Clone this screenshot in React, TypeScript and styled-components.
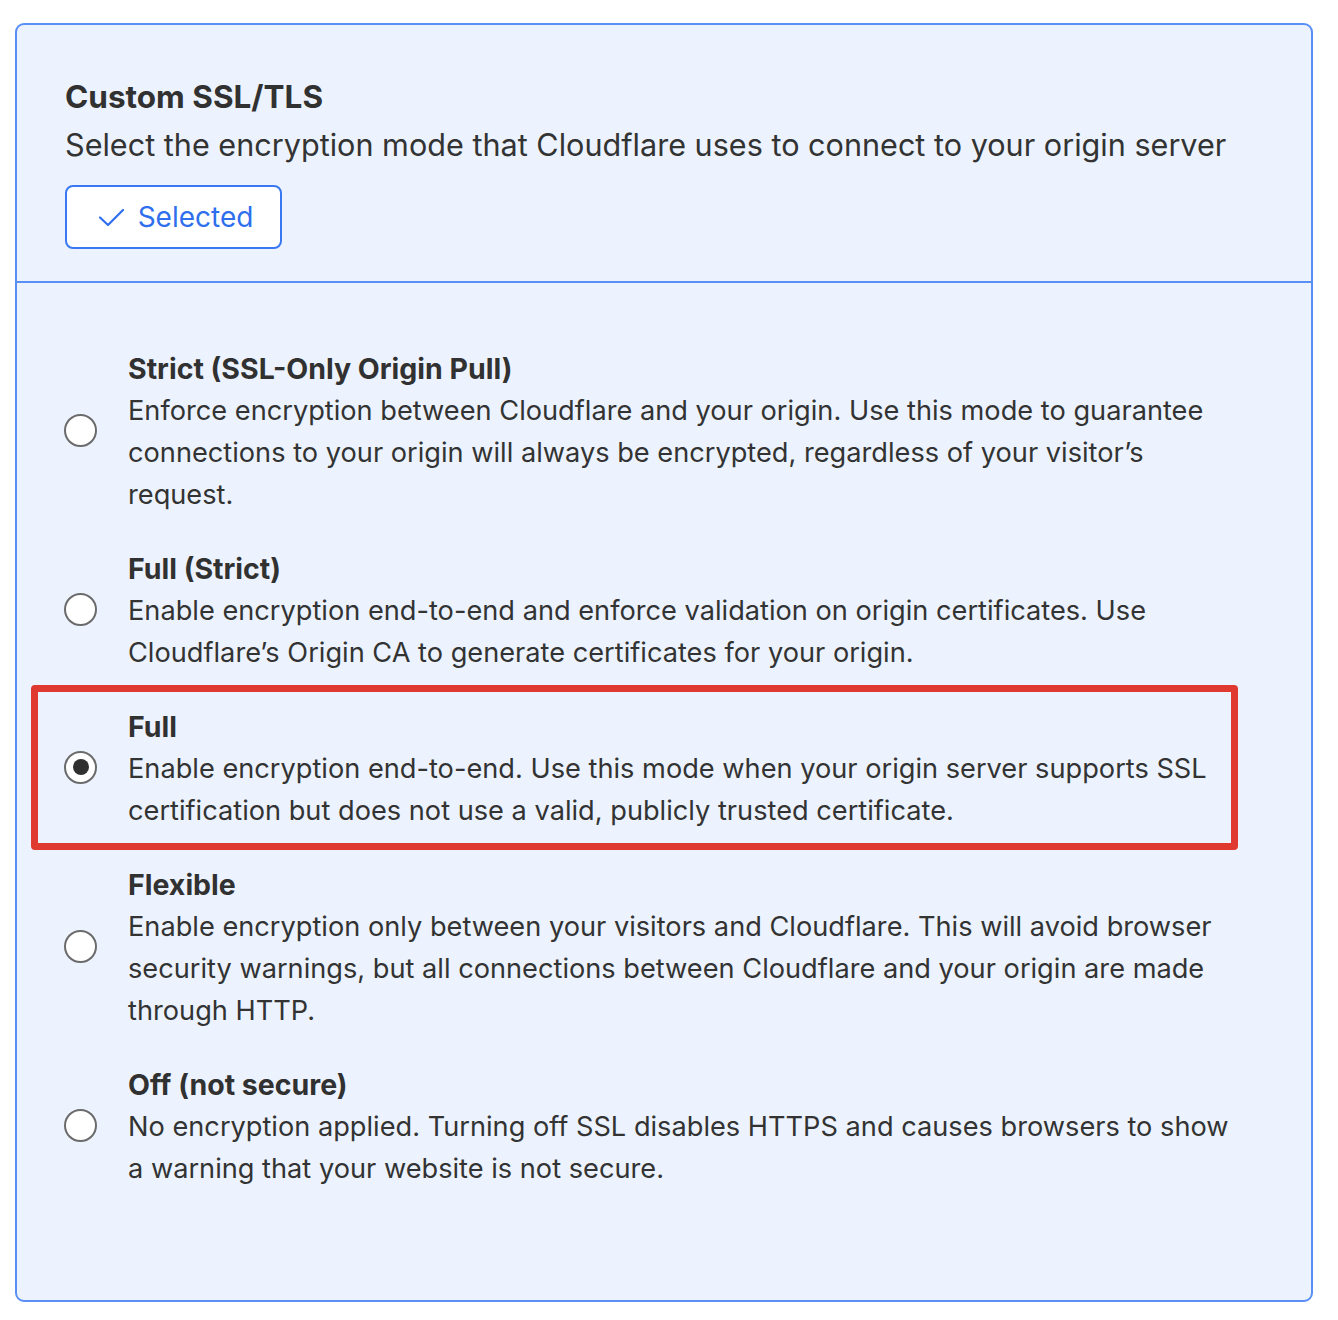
import React from 'react';
import styled, { createGlobalStyle } from 'styled-components';

const GlobalStyle = createGlobalStyle`
  body {
    margin: 0;
    background: #ffffff;
    font-family: Inter, "Noto Sans", sans-serif;
    color: #333333;
  }
`;

const Card = styled.section`
  box-sizing: border-box;
  width: 1298px;
  height: 1279px;
  margin: 23px 0 0 15px;
  background: #ecf3fe;
  border: 2px solid #5a8ff6;
  border-radius: 9px;
`;

const Header = styled.header`
  padding: 51px 48px 32px;
  border-bottom: 2px solid #5a8ff6;
`;

const Title = styled.h2`
  margin: 0;
  font-size: 31.5px;
  line-height: 42px;
  font-weight: 700;
  color: #313131;
`;

const Subtitle = styled.p`
  margin: 6px 0 0;
  font-size: 30.6px;
  line-height: 42px;
  color: #333333;
`;

const SelectedButton = styled.button`
  box-sizing: border-box;
  display: flex;
  align-items: center;
  justify-content: center;
  gap: 12px;
  width: 217px;
  height: 64px;
  margin-top: 19px;
  padding: 0 0 0 4px;
  background: #ffffff;
  border: 2px solid #3a78f2;
  border-radius: 8px;
  color: #2f6fee;
  font-family: inherit;
  font-size: 28px;
`;

const OptionList = styled.div`
  display: flex;
  flex-direction: column;
  gap: 32px;
  padding: 65px 76px 0 47px;
`;

const Option = styled.label`
  position: relative;
  display: flex;
  align-items: center;
  gap: 31px;
`;

const Radio = styled.span<{ $checked?: boolean }>`
  box-sizing: border-box;
  flex: none;
  width: 33px;
  height: 33px;
  border-radius: 50%;
  border: 2px solid #6b6b6b;
  background: #ffffff;
  display: flex;
  align-items: center;
  justify-content: center;
  margin-top: -4px;

  &::after {
    content: '';
    display: ${(p) => (p.$checked ? 'block' : 'none')};
    width: 16px;
    height: 16px;
    border-radius: 50%;
    background: #2f2f2f;
  }
`;

const OptionText = styled.div`
  flex: 1;
  font-size: 27.2px;
  line-height: 42px;
  color: #333333;
`;

const OptionTitle = styled.div`
  font-size: 28.5px;
  font-weight: 700;
  color: #313131;
`;

const Highlight = styled.span`
  position: absolute;
  left: -33px;
  right: -3px;
  top: -21px;
  bottom: -18px;
  border: 7px solid #e03a30;
  border-radius: 4px;
  pointer-events: none;
`;

const CheckIcon = () => (
  <svg width="28" height="28" viewBox="0 0 28 28" fill="none">
    <path d="M2 14.5 L10 22 L25 7" stroke="#2f6fee" strokeWidth="2.2" strokeLinecap="round" strokeLinejoin="round" />
  </svg>
);

type Mode = {
  title: string;
  text: string;
  checked?: boolean;
};

const modes: Mode[] = [
  {
    title: 'Strict (SSL-Only Origin Pull)',
    text: 'Enforce encryption between Cloudflare and your origin. Use this mode to guarantee connections to your origin will always be encrypted, regardless of your visitor\u2019s request.',
  },
  {
    title: 'Full (Strict)',
    text: 'Enable encryption end-to-end and enforce validation on origin certificates. Use Cloudflare\u2019s Origin CA to generate certificates for your origin.',
  },
  {
    title: 'Full',
    text: 'Enable encryption end-to-end. Use this mode when your origin server supports SSL certification but does not use a valid, publicly trusted certificate.',
    checked: true,
  },
  {
    title: 'Flexible',
    text: 'Enable encryption only between your visitors and Cloudflare. This will avoid browser security warnings, but all connections between Cloudflare and your origin are made through HTTP.',
  },
  {
    title: 'Off (not secure)',
    text: 'No encryption applied. Turning off SSL disables HTTPS and causes browsers to show a warning that your website is not secure.',
  },
];

export default function App() {
  return (
    <>
      <GlobalStyle />
      <Card>
        <Header>
          <Title>Custom SSL/TLS</Title>
          <Subtitle>Select the encryption mode that Cloudflare uses to connect to your origin server</Subtitle>
          <SelectedButton>
            <CheckIcon />
            Selected
          </SelectedButton>
        </Header>
        <OptionList>
          {modes.map((m) => (
            <Option key={m.title}>
              <Radio $checked={m.checked} />
              <OptionText>
                <OptionTitle>{m.title}</OptionTitle>
                {m.text}
              </OptionText>
              {m.checked && <Highlight />}
            </Option>
          ))}
        </OptionList>
      </Card>
    </>
  );
}
